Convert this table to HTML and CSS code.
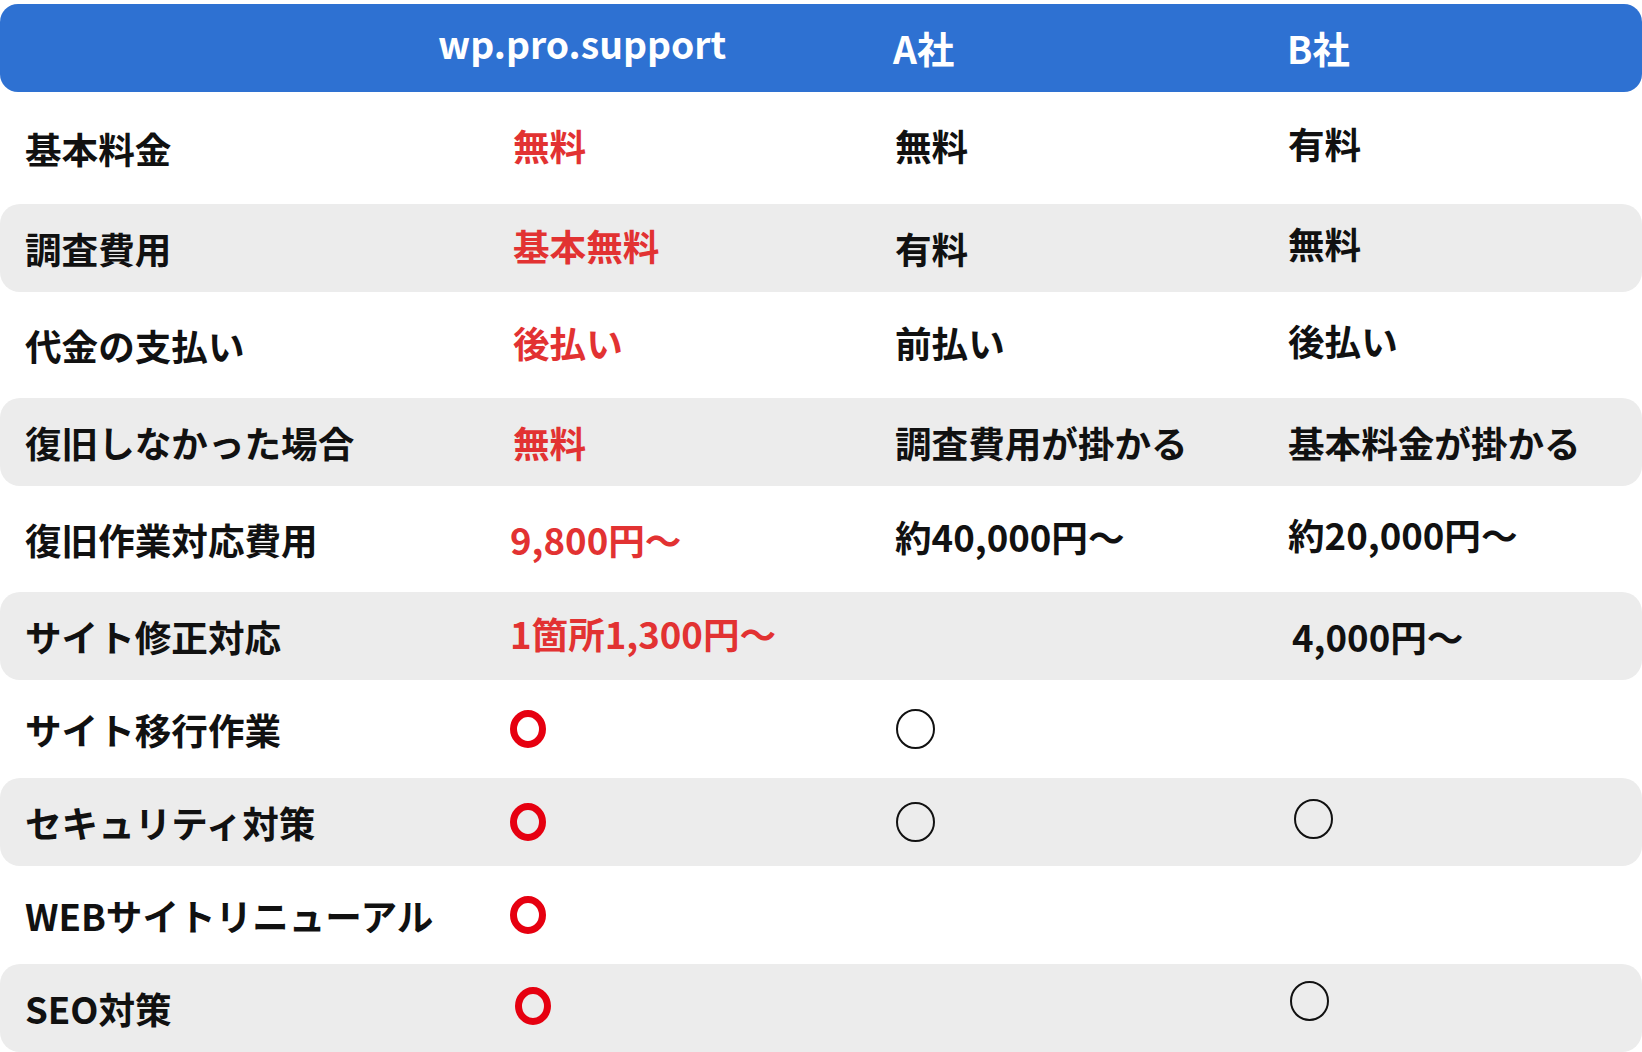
FILE: index.html
```html
<!DOCTYPE html>
<html lang="ja">
<head>
<meta charset="utf-8">
<title>比較表</title>
<link rel="stylesheet" href="styles.css">
</head>
<body>
<div class="cmp">
  <div class="row head">
    <div class="hcell"></div>
    <div class="hcell hcell-main">wp.pro.support</div>
    <div class="hcell">A社</div>
    <div class="hcell hcell-b">B社</div>
  </div>

  <div class="row h112">
    <div class="cell label">基本料金</div>
    <div class="cell red ind up-s">無料</div>
    <div class="cell up-s">無料</div>
    <div class="cell c4 up-m">有料</div>
  </div>

  <div class="row gray">
    <div class="cell label">調査費用</div>
    <div class="cell red ind up-s">基本無料</div>
    <div class="cell">有料</div>
    <div class="cell c4 up-m">無料</div>
  </div>

  <div class="row h106">
    <div class="cell label">代金の支払い</div>
    <div class="cell red ind up-s">後払い</div>
    <div class="cell up-s">前払い</div>
    <div class="cell c4 up-m">後払い</div>
  </div>

  <div class="row gray">
    <div class="cell label">復旧しなかった場合</div>
    <div class="cell red ind">無料</div>
    <div class="cell">調査費用が掛かる</div>
    <div class="cell c4">基本料金が掛かる</div>
  </div>

  <div class="row h106">
    <div class="cell label">復旧作業対応費用</div>
    <div class="cell red">9,800円〜</div>
    <div class="cell up-s">約40,000円〜</div>
    <div class="cell c4 up-m">約20,000円〜</div>
  </div>

  <div class="row gray">
    <div class="cell label">サイト修正対応</div>
    <div class="cell red up-s">1箇所1,300円〜</div>
    <div class="cell"></div>
    <div class="cell c4 num">4,000円〜</div>
  </div>

  <div class="row h98">
    <div class="cell label">サイト移行作業</div>
    <div class="cell"><svg class="ring" viewBox="0 0 38 38"><ellipse cx="18" cy="19" rx="14.5" ry="15.5"/></svg></div>
    <div class="cell"><svg class="circ" viewBox="0 0 40 40"><ellipse cx="19.5" cy="20" rx="18.5" ry="19"/></svg></div>
    <div class="cell c4"></div>
  </div>

  <div class="row gray">
    <div class="cell label">セキュリティ対策</div>
    <div class="cell"><svg class="ring" viewBox="0 0 38 38"><ellipse cx="18" cy="19" rx="14.5" ry="15.5"/></svg></div>
    <div class="cell"><svg class="circ" viewBox="0 0 40 40"><ellipse cx="19.5" cy="20" rx="18.5" ry="19"/></svg></div>
    <div class="cell c4"><svg class="circ circ-r8" viewBox="0 0 40 40"><ellipse cx="19.5" cy="20" rx="18.5" ry="19"/></svg></div>
  </div>

  <div class="row h98">
    <div class="cell label">WEBサイトリニューアル</div>
    <div class="cell"><svg class="ring" viewBox="0 0 38 38"><ellipse cx="18" cy="19" rx="14.5" ry="15.5"/></svg></div>
    <div class="cell"></div>
    <div class="cell c4"></div>
  </div>

  <div class="row gray">
    <div class="cell label">SEO対策</div>
    <div class="cell"><svg class="ring ring-r10" viewBox="0 0 38 38"><ellipse cx="18" cy="19" rx="14.5" ry="15.5"/></svg></div>
    <div class="cell"></div>
    <div class="cell c4"><svg class="circ circ-r10" viewBox="0 0 40 40"><ellipse cx="19.5" cy="20" rx="18.5" ry="19"/></svg></div>
  </div>
</div>
</body>
</html>
```
FILE: styles.css
```css
* { box-sizing: border-box; }
html, body { margin: 0; padding: 0; background: #fff; }
body {
  font-family: "Noto Sans CJK JP", "Noto Sans", sans-serif;
  font-weight: 700;
  font-size: 36.6px;
  color: #111;
}
.cmp {
  width: 1642px;
  padding-top: 4px;
  display: flex;
  flex-direction: column;
}
.row {
  display: grid;
  grid-template-columns: 485px 385px 392px 1fr;
  padding-left: 25px;
  align-items: center;
  line-height: normal;
}
.head {
  height: 88px;
  background: #2e71d2;
  border-radius: 18px;
  color: #fff;
  padding-left: 0;
  font-size: 37.3px;
  grid-template-columns: 438px 455px 392px 1fr;
}
.hcell { white-space: nowrap; }
.hcell-main { margin-bottom: 10px; }
.hcell-b { margin-left: 2px; }
.gray {
  height: 88px;
  background: #ececec;
  border-radius: 20px;
}
.h112 { height: 112px; }
.h106 { height: 106px; }
.h98 { height: 98px; }
.cell {
  white-space: nowrap;
  display: flex;
  align-items: center;
}
.red { color: #e23232; }
.ind { padding-left: 3px; }
.c4 { margin-left: 1px; }
.num { padding-left: 4px; }
.up-s { margin-bottom: 5px; }
.up-m { margin-bottom: 9px; }
.ring { width: 38px; height: 38px; }
.ring ellipse { fill: none; stroke: #e60010; stroke-width: 7; }
.ring-r10 { margin-left: 5px; margin-top: -4px; }
.circ { width: 40px; height: 40px; margin-left: 1px; }
.circ ellipse { fill: none; stroke: #111; stroke-width: 2; }
.circ-r8 { margin-left: 6px; margin-bottom: 6px; }
.circ-r10 { margin-left: 2px; margin-bottom: 14px; }
```
